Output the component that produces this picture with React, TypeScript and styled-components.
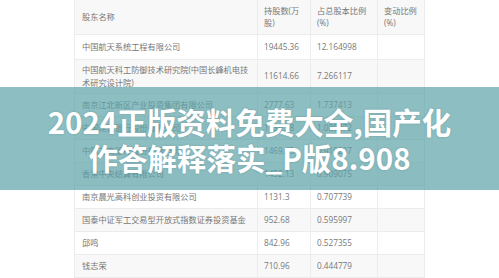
import styled, { createGlobalStyle } from "styled-components";

const GlobalStyle = createGlobalStyle`
  body {
    margin: 0;
    background: #fff;
  }
`;

const Page = styled.div`
  position: relative;
  width: 499px;
  height: 278px;
  overflow: hidden;
  font-family: "Open Sans", "Noto Sans CJK SC", sans-serif;
`;

const Table = styled.div`
  width: 351px;
  margin: 0 auto;
  border-left: 1px solid #ececec;
  box-sizing: border-box;
`;

const Row = styled.div<{ $h: number; $alt?: boolean }>`
  display: grid;
  grid-template-columns: 183px 53px 67px 47px;
  height: ${(p) => p.$h}px;
  box-sizing: border-box;
  background: ${(p) => (p.$alt ? "#f8f8f8" : "#fff")};
  border-bottom: 1px solid #ececec;
`;

const Cell = styled.div<{ $name?: boolean }>`
  display: flex;
  align-items: center;
  padding: 0 5px 0 ${(p) => (p.$name ? 7 : 6)}px;
  border-right: 1px solid #ececec;
  font-size: 8.2px;
  line-height: 12.5px;
  color: #777;
  overflow: hidden;
`;

const Banner = styled.div`
  position: absolute;
  top: 87px;
  left: 0;
  right: 0;
  height: 103px;
  background: rgba(92, 163, 168, 0.7);
  display: flex;
  align-items: center;
  justify-content: center;
  text-align: center;
  color: #fff;
  font-family: "Noto Sans CJK SC", sans-serif;
  font-weight: 700;
  font-size: 29.5px;
  line-height: 36px;
  text-shadow: 0 0 2px rgba(40, 80, 85, 0.3);
`;

const rows = [
  { name: "中国航天系统工程有限公司", hold: "19445.36", pct: "12.164998", h: 25 },
  { name: "中国航天科工防御技术研究院(中国长峰机电技术研究设计院)", hold: "11614.66", pct: "7.266117", h: 34 },
  { name: "南京江北新区产业投资集团有限公司", hold: "2777.63", pct: "1.737413", h: 23 },
  { name: "中国建设银行股份有限公司", hold: "1739.58", pct: "1.088372", h: 23 },
  { name: "中国工商银行股份有限公司", hold: "1469.43", pct: "0.919287", h: 23 },
  { name: "香港中央结算有限公司", hold: "1452.13", pct: "0.909075", h: 23 },
  { name: "南京晨光高科创业投资有限公司", hold: "1131.3", pct: "0.707739", h: 23 },
  { name: "国泰中证军工交易型开放式指数证券投资基金", hold: "952.68", pct: "0.595997", h: 23 },
  { name: "邱鸣", hold: "842.96", pct: "0.527355", h: 23 },
  { name: "钱志荣", hold: "710.96", pct: "0.444779", h: 23 },
];

export default function App() {
  return (
    <Page>
      <GlobalStyle />
      <Table>
        <Row $h={35} $alt>
          <Cell $name>股东名称</Cell>
          <Cell>
            持股数(万
            <br />
            股)
          </Cell>
          <Cell>
            占总股本比例
            <br />
            (%)
          </Cell>
          <Cell>
            变动比例
            <br />
            (%)
          </Cell>
        </Row>
        {rows.map((r, i) => (
          <Row key={r.name} $h={r.h} $alt={i % 2 === 1}>
            <Cell $name>
              <span>{r.name}</span>
            </Cell>
            <Cell>{r.hold}</Cell>
            <Cell>{r.pct}</Cell>
            <Cell />
          </Row>
        ))}
      </Table>
      <Banner>
        <div>
          2024正版资料免费大全,国产化
          <br />
          作答解释落实_P版8.908
        </div>
      </Banner>
    </Page>
  );
}
